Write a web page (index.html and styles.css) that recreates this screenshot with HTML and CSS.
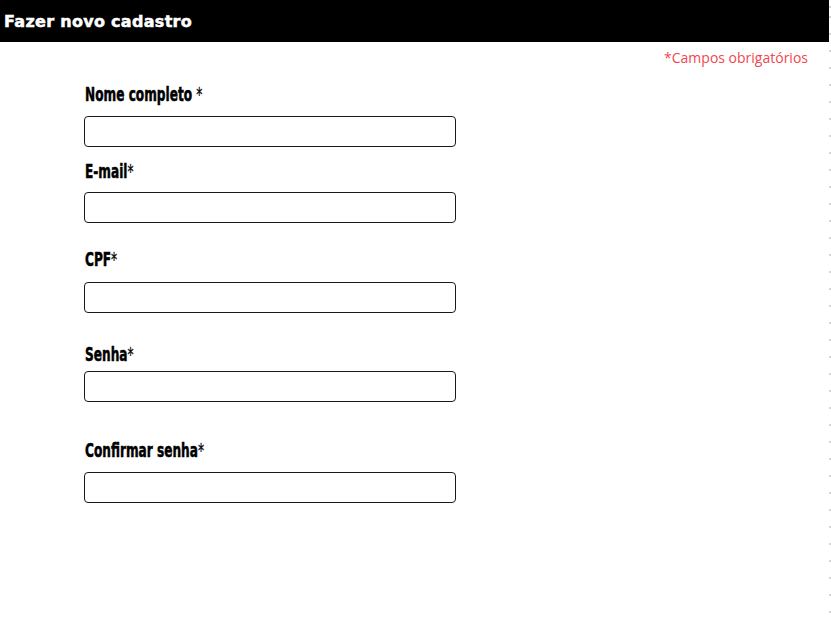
FILE: index.html
```html
<!DOCTYPE html>
<html lang="pt-BR">
<head>
<meta charset="utf-8">
<title>Fazer novo cadastro</title>
<link rel="stylesheet" href="styles.css">
</head>
<body>
<div class="page">
  <main class="main">
    <header class="topbar">
      <h1 class="title">Fazer novo cadastro</h1>
    </header>
    <p class="required-note">*Campos obrigatórios</p>
    <form class="form">
      <label class="label f-nome" for="nome">Nome completo <span class="req">*</span></label>
      <input class="input in-nome" id="nome" type="text">
      <label class="label f-email" for="email">E-mail<span class="req">*</span></label>
      <input class="input in-email" id="email" type="email">
      <label class="label f-cpf" for="cpf">CPF<span class="req">*</span></label>
      <input class="input in-cpf" id="cpf" type="text">
      <label class="label f-senha" for="senha">Senha<span class="req">*</span></label>
      <input class="input in-senha" id="senha" type="password">
      <label class="label f-conf" for="conf">Confirmar senha<span class="req">*</span></label>
      <input class="input in-conf" id="conf" type="password">
    </form>
  </main>
  <div class="edge"></div>
</div>
</body>
</html>
```
FILE: styles.css
```css
html, body {
  margin: 0;
  padding: 0;
  background: #ffffff;
}
.page {
  display: flex;
  min-height: 622px;
}
.main {
  width: 829px;
}
.edge {
  width: 2px;
  background-image: repeating-linear-gradient(to bottom, #d4d4d4 0, #d4d4d4 2px, transparent 2px, transparent 17px);
  background-position: 0 16px;
}
.topbar {
  height: 42px;
  background: #000;
  display: flex;
  align-items: center;
}
.title {
  margin: 0 0 0 4px;
  font-family: "DejaVu Sans", sans-serif;
  font-weight: 700;
  font-size: 16px;
  letter-spacing: 0.3px;
  color: #fff;
  -webkit-text-stroke: 0.5px #fff;
}
.required-note {
  margin: 6px 21px 0 0;
  text-align: right;
  font-family: "Open Sans", sans-serif;
  font-size: 14px;
  line-height: 20px;
  color: #f1474d;
}
.form {
  display: flex;
  flex-direction: column;
  align-items: flex-start;
  margin-left: 84px;
}
.label {
  display: block;
  height: 20px;
  line-height: 20px;
  margin-left: 1px;
  font-family: "DejaVu Sans Condensed", "DejaVu Sans", sans-serif;
  font-stretch: condensed;
  font-weight: 700;
  font-size: 20px;
  color: #000;
  -webkit-text-stroke: 0.5px #000;
  transform: scaleX(0.675);
  transform-origin: left center;
  white-space: nowrap;
}
.req {
  font-weight: 400;
  -webkit-text-stroke: 0.3px #000;
}
.input {
  box-sizing: border-box;
  width: 372px;
  height: 31px;
  margin: 0;
  border: 1px solid #1a1a1a;
  border-radius: 4px;
  background: #fff;
}
.f-nome { margin-top: 16px; }
.in-nome { margin-top: 12px; }
.f-email { margin-top: 14px; }
.in-email { margin-top: 11px; }
.f-cpf { margin-top: 26px; }
.in-cpf { margin-top: 13px; }
.f-senha { margin-top: 31px; }
.in-senha { margin-top: 7px; }
.f-conf { margin-top: 38px; }
.in-conf { margin-top: 12px; }
```
